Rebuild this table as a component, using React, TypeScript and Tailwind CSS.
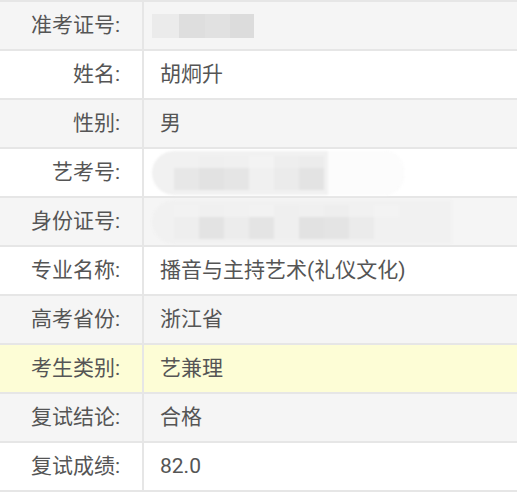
import React from 'react';

type Row = {
    label: string;
    value?: string;
    bg: string;
    mask?: 'short' | 'mid' | 'long';
};

const rows: Row[] = [
    { label: '准考证号:', bg: 'bg-[#f5f5f5]', mask: 'short' },
    { label: '姓名:', value: '胡炯升', bg: 'bg-white' },
    { label: '性别:', value: '男', bg: 'bg-[#f5f5f5]' },
    { label: '艺考号:', bg: 'bg-white', mask: 'mid' },
    { label: '身份证号:', bg: 'bg-[#f5f5f5]', mask: 'long' },
    { label: '专业名称:', value: '播音与主持艺术(礼仪文化)', bg: 'bg-white' },
    { label: '高考省份:', value: '浙江省', bg: 'bg-[#f5f5f5]' },
    { label: '考生类别:', value: '艺兼理', bg: 'bg-[#fdfdd6]' },
    { label: '复试结论:', value: '合格', bg: 'bg-[#f5f5f5]' },
    { label: '复试成绩:', value: '82.0', bg: 'bg-white' },
];

// blurred mosaic standing in for the redacted numbers
function Mosaic({ kind }: { kind: 'short' | 'mid' | 'long' }) {
    if (kind === 'short') {
        return (
            <div className="flex h-[24px] items-stretch blur-[0.6px]">
                <div className="w-[27px] bg-[#ebebeb]" />
                <div className="w-[26px] bg-[#dedede]" />
                <div className="w-[25px] bg-[#e1e1e1]" />
                <div className="w-[24px] bg-[#dcdcdc]" />
            </div>
        );
    }
    const top = kind === 'mid'
        ? ['#f1f1f1', '#efefef', '#f0f0f0', '#f3f3f3', '#eeeeee', '#ececec']
        : ['#f2f2f2', '#f0f0f0', '#f1f1f1', '#f2f2f2', '#efefef', '#f0f0f0', '#eeeeee', '#f1f1f1', '#f3f3f3'];
    const bottom = kind === 'mid'
        ? ['#e7e7e7', '#e2e2e2', '#e5e5e5', '#f0f0f0', '#ebebeb', '#e3e3e3']
        : ['#eeeeee', '#e3e3e3', '#ececec', '#e4e4e4', '#efefef', '#e2e2e2', '#e4e4e4', '#ebebeb', '#f1f1f1'];
    return (
        <div className={`relative flex h-[44px] items-center rounded-l-[22px] bg-[#f1f1f1] blur-[0.8px] ${kind === 'mid' ? 'w-[252px] rounded-r-[20px]' : 'w-[300px]'}`}>
            <div className="ml-[22px] flex flex-col">
                <div className="flex h-[12px]">
                    {top.map((c, i) => <div key={i} className="w-[25px]" style={{ background: c }} />)}
                </div>
                <div className="flex h-[22px]">
                    {bottom.map((c, i) => <div key={i} className="w-[25px]" style={{ background: c }} />)}
                </div>
            </div>
            {kind === 'mid' && <div className="ml-auto h-[44px] w-[76px] rounded-r-[20px] bg-[#fcfcfc]" />}
        </div>
    );
}

export default function App() {
    return (
        <div className="w-[517px] h-[492px] overflow-hidden bg-white border-t-2 border-[#e6e6e6] text-[21px] text-[#555]" style={{ fontFamily: 'Roboto, "Noto Sans CJK SC", sans-serif' }}>
            {rows.map((r) => (
                <div key={r.label} className={`flex h-[49px] border-b-2 border-[#e6e6e6] ${r.bg}`}>
                    <div className="flex w-[144px] shrink-0 items-center justify-end border-r-2 border-[#e6e6e6] pr-[22px] leading-none">
                        {r.label}
                    </div>
                    <div className="flex flex-1 items-center pl-[8px] leading-none">
                        {r.mask ? (
                            <Mosaic kind={r.mask} />
                        ) : (
                            <span className="pl-[8px]">{r.value}</span>
                        )}
                    </div>
                </div>
            ))}
        </div>
    );
}
